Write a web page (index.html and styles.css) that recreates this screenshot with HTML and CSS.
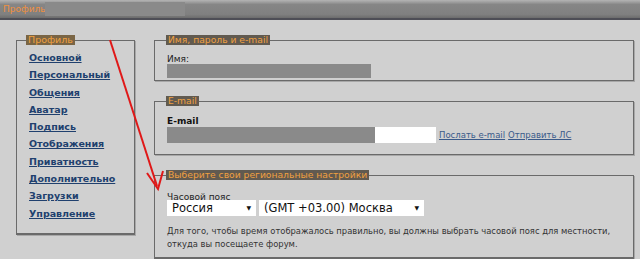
FILE: index.html
```html
<!DOCTYPE html>
<html lang="ru">
<head>
    <meta charset="UTF-8">
    <title>Профиль</title>
    <link rel="stylesheet" href="styles.css">
</head>
<body>

<div id="topbar">
    <span class="title">Профиль:</span>
    <span class="hidden-name"></span>
</div>

<div id="main">
    <fieldset class="box menu">
        <legend>Профиль</legend>
        <ul>
            <li><a href="#">Основной</a></li>
            <li><a href="#">Персональный</a></li>
            <li><a href="#">Общения</a></li>
            <li><a href="#">Аватар</a></li>
            <li><a href="#">Подпись</a></li>
            <li><a href="#">Отображения</a></li>
            <li><a href="#">Приватность</a></li>
            <li><a href="#">Дополнительно</a></li>
            <li><a href="#">Загрузки</a></li>
            <li><a href="#">Управление</a></li>
        </ul>
    </fieldset>

    <div id="content">
        <fieldset class="box name">
            <legend>Имя, пароль и e-mail</legend>
            <div class="label">Имя:</div>
            <div class="blur-bar"></div>
        </fieldset>

        <fieldset class="box mail">
            <legend>E-mail</legend>
            <div class="label bold">E-mail</div>
            <div class="mail-row">
                <div class="mail-input"><div class="blur-bar small"></div></div>
                <a href="#">Послать e-mail</a>
                <a href="#">Отправить ЛС</a>
            </div>
        </fieldset>

        <fieldset class="box region">
            <legend>Выберите свои региональные настройки</legend>
            <div class="label">Часовой пояс</div>
            <div class="selects">
                <div class="select country">Россия<span class="caret">▼</span></div>
                <div class="select zone">(GMT +03.00) Москва<span class="caret">▼</span></div>
            </div>
            <p class="hint">Для того, чтобы время отображалось правильно, вы должны выбрать часовой пояс для местности,<br>откуда вы посещаете форум.</p>
        </fieldset>
    </div>
</div>

<!-- стрелка поверх скриншота -->
<svg id="arrow" width="640" height="259" viewBox="0 0 640 259">
    <line x1="110" y1="40" x2="157" y2="186" stroke="#e01818" stroke-width="2"/>
    <polyline points="147,173 158,189 163,171" fill="none" stroke="#e01818" stroke-width="2"/>
</svg>

</body>
</html>
```

FILE: styles.css
```css
html, body {
    margin: 0;
    padding: 0;
    background: #d0d0d0;
    font-family: "DejaVu Sans", Verdana, sans-serif;
    font-size: 9px;
    color: #222;
}

#topbar {
    position: relative;
    height: 18px;
    background: linear-gradient(#b4b4b4, #868686 25%, #808080 80%, #6c6c6c);
    border-bottom: 2px solid #4e4e56;
}

#topbar .title {
    position: absolute;
    left: 3px;
    top: 4px;
    color: #f09040;
    font-size: 9px;
}

#topbar .hidden-name {
    position: absolute;
    left: 45px;
    top: 2px;
    width: 140px;
    height: 14px;
    background: #8a8a8a;
}

#main {
    display: flex;
    align-items: flex-start;
    padding: 15px 6px 0 16px;
    gap: 19px;
}

.box {
    margin: 0;
    border: 1px solid #6a6a6a;
    box-shadow: 1px 1px 0 #a8a8a8;
}

.box legend {
    background: #615a50;
    color: #f0a040;
    padding: 0 2px 0 2px;
    margin-left: -1px;
    font-size: 9.2px;
    line-height: 10px;
}

.menu {
    flex-shrink: 0;
    width: 119px;
    box-sizing: border-box;
    padding: 4px 0 11px 12px;
    border-bottom-width: 2px;
}

.menu legend {
    background: #7a6545;
    margin-left: -3px;
    font-size: 9.5px;
}

.menu ul {
    list-style: none;
    margin: 0;
    padding: 0;
}

.menu li {
    height: 17.3px;
    line-height: 17.3px;
}

.menu a {
    color: #20406e;
    font-weight: bold;
    font-size: 9.5px;
}

#content {
    flex: 1;
    min-width: 0;
    display: flex;
    flex-direction: column;
    gap: 15px;
}

#content .box {
    padding: 4px 4px 0 12px;
}

.label {
    line-height: 10px;
}

.bold {
    font-weight: bold;
    color: #111;
}

.name {
    height: 40px;
}

.name .label {
    margin-top: 6px;
    line-height: 9px;
}

.blur-bar {
    width: 204px;
    height: 14px;
    background: #8a8a8a;
}

.mail {
    height: 53px;
}

.mail .label {
    margin-top: 6px;
    margin-bottom: 1px;
}

.mail-row {
    display: flex;
    align-items: center;
    gap: 3px;
}

.mail-input {
    width: 269px;
    height: 16px;
    background: #fff;
    display: flex;
    align-items: center;
}

.mail-input .blur-bar {
    width: 208px;
    height: 16px;
}

.mail-row a {
    color: #3a5a8a;
    font-size: 8.5px;
}

.region {
    height: 82px;
    border-bottom-width: 2px;
}

.region .label {
    margin-top: 8px;
}

.selects {
    display: flex;
    gap: 3px;
    margin-top: -2px;
}

.select {
    position: relative;
    background: #fff;
    height: 16px;
    line-height: 16px;
    padding-left: 5px;
    box-sizing: border-box;
    font-size: 11.5px;
    color: #111;
}

.select.country {
    width: 89px;
}

.select.zone {
    width: 165px;
}

.caret {
    position: absolute;
    right: 5px;
    top: 0;
    font-size: 6px;
}

.hint {
    margin: 9px 0 0 0;
    line-height: 13px;
    color: #333;
    font-size: 8.4px;
    white-space: nowrap;
}

#arrow {
    position: absolute;
    left: 0;
    top: 0;
    pointer-events: none;
}
```
